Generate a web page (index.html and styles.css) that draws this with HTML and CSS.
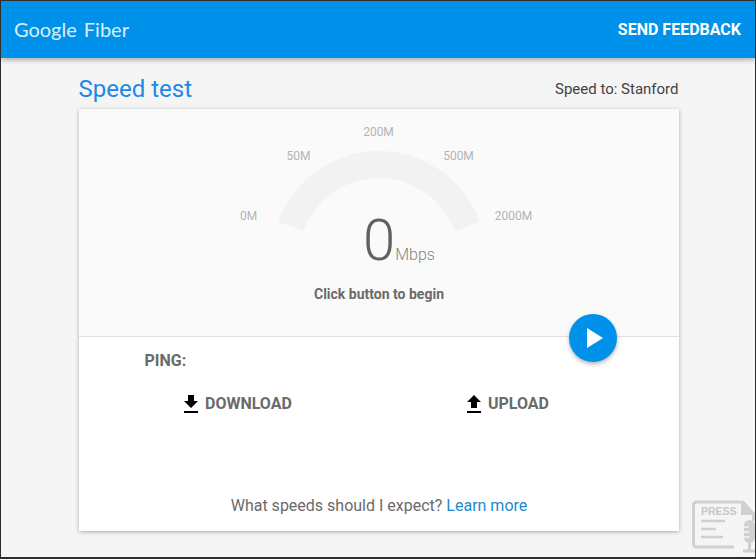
FILE: index.html
```html
<!DOCTYPE html>
<html lang="en">
<head>
<meta charset="utf-8">
<title>Google Fiber Speed test</title>
<link rel="stylesheet" href="styles.css">
</head>
<body>
<div class="frame">
  <header class="topbar">
    <div class="logo"><span class="logo-google">Google</span><span class="logo-fiber">Fiber</span></div>
    <a class="feedback">SEND FEEDBACK</a>
  </header>
  <main class="content">
    <div class="title-row">
      <h1 class="title">Speed test</h1>
      <div class="server">Speed to: Stanford</div>
    </div>
    <section class="card">
      <div class="gauge-panel">
        <div class="gauge">
          <svg class="arc" width="220" height="90" viewBox="0 0 220 90" aria-hidden="true">
            <path d="M9.2 72A107 107 0 0 1 210.8 72L185.3 81A80 80 0 0 0 34.7 81Z" fill="#f2f2f2"/>
          </svg>
          <span class="tick t0">0M</span>
          <span class="tick t50">50M</span>
          <span class="tick t200">200M</span>
          <span class="tick t500">500M</span>
          <span class="tick t2000">2000M</span>
          <div class="reading"><span class="value">0</span><span class="unit">Mbps</span></div>
        </div>
        <div class="status">Click button to begin</div>
      </div>
      <button class="play" aria-label="Start">
        <svg width="18" height="22" viewBox="0 0 18 22"><path d="M1 1v20l16-10z" fill="#fff"/></svg>
      </button>
      <div class="results">
        <div class="ping">PING:</div>
        <div class="metrics">
          <div class="metric">
            <svg width="16" height="18" viewBox="0 0 16 18"><path d="M5 0h6v6h4l-7 7-7-7h4zM1 16h14v2H1z" fill="#000"/></svg>
            <span>DOWNLOAD</span>
          </div>
          <div class="metric">
            <svg width="16" height="18" viewBox="0 0 16 18"><path d="M5 13h6V7h4L8 0 1 7h4zM1 16h14v2H1z" fill="#000"/></svg>
            <span>UPLOAD</span>
          </div>
        </div>
        <p class="expect">What speeds should I expect? <a class="learn">Learn more</a></p>
      </div>
    </section>
  </main>
  <svg class="press" width="64" height="54" viewBox="0 0 64 54" aria-hidden="true">
    <path d="M49 2H4.500a3 3 0 0 0-3 3v39a3 3 0 0 0 3 3H42M50 1l11.500 13v7" fill="none" stroke="#d0d0d0" stroke-width="3"/>
    <path d="M49 1v14h13z" fill="#d0d0d0"/>
    <text x="9" y="15" class="press-text">PRESS</text>
    <path d="M9 21h24M9 29h15M9 37h22" stroke="#d0d0d0" stroke-width="2.500" fill="none"/>
    <rect x="52" y="20" width="11" height="23" rx="5.500" fill="#d0d0d0"/>
    <path d="M52 27h5M52 32h5M52 37h5" stroke="#f5f5f5" stroke-width="1.500"/>
    <path d="M57.500 43v7M51 51h13" stroke="#d0d0d0" stroke-width="3"/>
  </svg>
</div>
</body>
</html>
```
FILE: styles.css
```css
* { box-sizing: border-box; }
html, body { margin: 0; height: 100%; }
body { font-family: Roboto, "Liberation Sans", sans-serif; background: #f5f5f5; overflow: hidden; }
.frame { position: relative; width: 756px; height: 559px; border-style: solid; border-color: #2e2e2e; border-width: 1px 1px 2px 1px; overflow: hidden; }
.topbar { height: 57px; background: #0091ea; display: flex; align-items: center; justify-content: space-between; padding: 0 14px 0 13px; box-shadow: 0 2px 5px rgba(0,0,0,.3); color: #fff; }
.logo { font-family: Lato, "Open Sans", sans-serif; font-size: 20px; color: #d9effc; display: flex; gap: 7px; margin-top: -2px; margin-right: -2px; }
.feedback { font-size: 16px; font-weight: 700; }
.content { width: 600px; margin-left: 78px; }
.title-row { display: flex; justify-content: space-between; align-items: center; height: 51px; padding-top: 11px; }
.title { margin: 0 0 0 -.5px; font-size: 24px; font-weight: 400; color: #1e88e5; }
.server { font-size: 15px; color: #424242; margin-right: .5px; }
.card { position: relative; height: 422px; background: #fff; box-shadow: 0 1px 4px rgba(0,0,0,.3); }
.gauge-panel { height: 228px; background: #fafafa; border-bottom: 1px solid #e0e0e0; padding-top: 16px; }
.gauge { position: relative; height: 151px; }
.arc { position: absolute; left: 190px; top: 25px; }
.tick { position: absolute; font-size: 12px; color: #b3b3b3; transform: translateX(-50%); }
.t0 { left: 169.500px; top: 84px; }
.t50 { left: 219.500px; top: 24px; }
.t200 { left: 299.500px; top: 0; }
.t500 { left: 379.500px; top: 24px; }
.t2000 { left: 434.500px; top: 84px; }
.reading { position: absolute; left: 284px; top: 85px; display: flex; align-items: baseline; }
.value { font-size: 58px; font-weight: 300; color: #616161; line-height: 60px; }
.unit { font-size: 16px; font-weight: 300; color: #858585; margin-left: 0; }
.status { text-align: center; font-size: 14px; font-weight: 700; color: #6a6a6a; margin-top: 10px; }
.play { position: absolute; left: 490px; top: 205px; width: 48px; height: 48px; padding: 0 0 0 3px; border: 0; border-radius: 50%; background: #0091ea; box-shadow: 0 2px 4px rgba(0,0,0,.3); display: flex; align-items: center; justify-content: center; }
.results { position: relative; height: 194px; color: #6a6a6a; }
.ping { position: absolute; left: 65.500px; top: 14px; font-size: 16px; font-weight: 700; }
.metrics { display: flex; padding-top: 57px; }
.metric { display: flex; align-items: center; gap: 6px; font-size: 16px; font-weight: 700; }
.metric:first-child { margin-left: 104px; }
.metric:last-child { margin-left: 174px; }
.expect { position: absolute; left: 0; right: 0; top: 159px; margin: 0; text-align: center; font-size: 16px; }
.learn { color: #1e88d0; }
.press { position: absolute; left: 691px; top: 499px; }
.press-text { font: 700 10.500px "Liberation Sans", sans-serif; fill: #c8c8c8; }
```
